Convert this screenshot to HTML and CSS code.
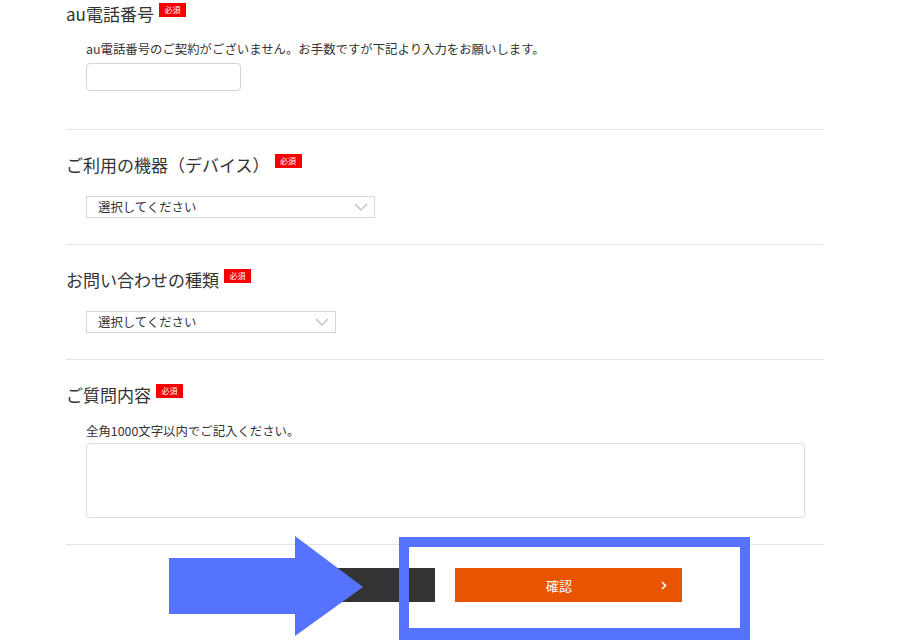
FILE: index.html
```html
<!DOCTYPE html>
<html lang="ja">
<head>
<meta charset="utf-8">
<title>お問い合わせ</title>
<link rel="stylesheet" href="styles.css">
</head>
<body>
<div class="form">
  <section class="sec sec-first">
    <h2 class="title">au電話番号<span class="badge">必須</span></h2>
    <div class="body">
      <p class="desc desc-first">au電話番号のご契約がございません。お手数ですが下記より入力をお願いします。</p>
      <input class="input" type="text">
    </div>
  </section>
  <section class="sec">
    <h2 class="title">ご利用の機器（デバイス）<span class="badge">必須</span></h2>
    <div class="body">
      <div class="select select-wide"><span>選択してください</span>
        <svg class="chev" width="14" height="8" viewBox="0 0 14 8"><polyline points="1,1 7,7 13,1" fill="none" stroke="#bbb" stroke-width="1.2"/></svg>
      </div>
    </div>
  </section>
  <section class="sec">
    <h2 class="title">お問い合わせの種類<span class="badge">必須</span></h2>
    <div class="body">
      <div class="select select-narrow"><span>選択してください</span>
        <svg class="chev" width="14" height="8" viewBox="0 0 14 8"><polyline points="1,1 7,7 13,1" fill="none" stroke="#bbb" stroke-width="1.2"/></svg>
      </div>
    </div>
  </section>
  <section class="sec">
    <h2 class="title">ご質問内容<span class="badge">必須</span></h2>
    <div class="body">
      <p class="desc">全角1000文字以内でご記入ください。</p>
      <textarea class="textarea"></textarea>
    </div>
  </section>
  <div class="buttons">
    <button class="btn btn-back" type="button"></button>
    <button class="btn btn-confirm" type="button"><span>確認</span>
      <svg class="btn-chev" width="6" height="9" viewBox="0 0 6 9"><polyline points="1,1 4.5,4.5 1,8" fill="none" stroke="#fff" stroke-width="1.6"/></svg>
    </button>
  </div>
</div>

<svg class="arrow" width="196" height="102" viewBox="0 0 196 102">
  <polygon points="0,22 126,22 126,0 194,51 126,100 126,78 0,78" fill="#5573ff"/>
</svg>
<div class="highlight"></div>
</body>
</html>
```

FILE: styles.css
```css
html, body {
  margin: 0;
  padding: 0;
  overflow: hidden;
  background: #fff;
}
body {
  font-family: "Noto Sans CJK JP", "Noto Sans", sans-serif;
  color: #333;
  height: 640px;
  position: relative;
}
.form {
  margin-left: 66px;
  width: 757px;
}
.sec {
  border-bottom: 1px solid #e4e4e4;
  padding: 23px 0 26px;
}
.sec-first {
  padding-top: 2px;
  padding-bottom: 38px;
}
.title {
  margin: 0;
  font-size: 17px;
  font-weight: normal;
  line-height: 24px;
  color: #333;
  display: flex;
  align-items: flex-start;
}
.badge {
  display: inline-flex;
  align-items: center;
  justify-content: center;
  width: 27px;
  height: 14px;
  margin-left: 5px;
  margin-top: 1px;
  background: #f60000;
  color: #fff;
  font-size: 8px;
  line-height: 14px;
}
.body {
  padding-left: 20px;
}
.desc {
  margin: 15px 0 3px;
  font-size: 12.4px;
  line-height: 18px;
  color: #333;
}
.desc-first {
  margin-top: 14px;
  margin-bottom: 5px;
}
.input {
  display: block;
  box-sizing: border-box;
  width: 155px;
  height: 28px;
  margin: 0;
  border: 1px solid #d4d4d4;
  border-radius: 4px;
  background: #fff;
}
.select {
  margin-top: 19px;
  box-sizing: border-box;
  height: 22px;
  border: 1px solid #d6d6d6;
  display: flex;
  align-items: center;
  justify-content: space-between;
  padding: 0 6px 0 11px;
  font-size: 12.4px;
  color: #333;
}
.select-wide { width: 289px; }
.select-narrow { width: 250px; }
.chev { display: block; }
.textarea {
  display: block;
  box-sizing: border-box;
  width: 719px;
  height: 75px;
  margin: 0;
  border: 1px solid #dcdcdc;
  border-radius: 4px;
  resize: none;
  background: #fff;
}
.buttons {
  display: flex;
  justify-content: center;
  gap: 20px;
  margin-top: 23px;
}
.btn {
  width: 227px;
  height: 34px;
  border: 0;
  margin: 0;
  padding: 0;
  font-family: inherit;
}
.btn-back {
  background: #333;
}
.btn-confirm {
  background: #e85400;
  color: #fff;
  font-size: 13px;
  display: flex;
  align-items: center;
  justify-content: center;
  position: relative;
  padding-right: 18px;
}
.btn-chev {
  position: absolute;
  right: 15px;
  top: 13px;
}
.arrow {
  position: absolute;
  left: 169px;
  top: 536px;
}
.highlight {
  position: absolute;
  left: 399px;
  top: 537px;
  width: 331px;
  height: 81px;
  border: 10px solid #5573ff;
  border-bottom-width: 14px;
}
```
